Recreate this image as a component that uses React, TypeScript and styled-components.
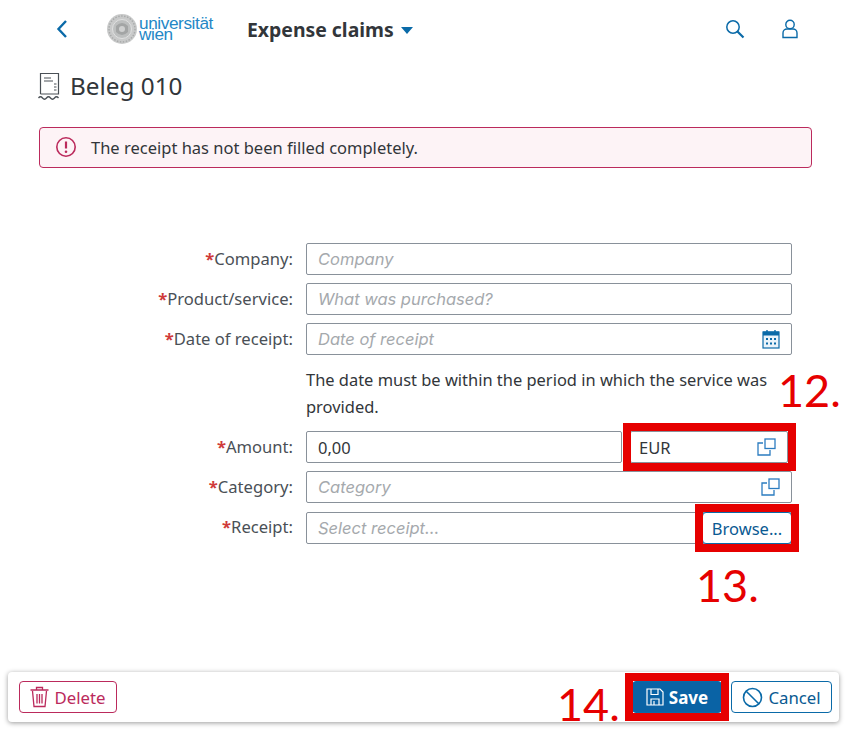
import React from 'react';
import styled, { createGlobalStyle } from 'styled-components';

const GlobalStyle = createGlobalStyle`
	html, body {
		margin: 0;
		padding: 0;
		background: #ffffff;
		font-family: 'Noto Sans', 'Open Sans', sans-serif;
		color: #32363a;
	}
	* {
		box-sizing: border-box;
	}
`;

const DARK_BLUE = '#0a6aa8';
const RED = '#e60000';
const ROSE = '#bb2a5c';

const ChevronLeft = () => (
	<svg width='14' height='20' viewBox='0 0 14 20' fill='none'>
		<path d='M11 2 L3.5 10 L11 18' stroke={DARK_BLUE} strokeWidth='2.4' />
	</svg>
);

const SearchIcon = () => (
	<svg width='20' height='20' viewBox='0 0 20 20' fill='none'>
		<circle cx='8' cy='8' r='6.2' stroke={DARK_BLUE} strokeWidth='1.5' />
		<path d='M12.5 12.5 L18.5 18.5' stroke={DARK_BLUE} strokeWidth='2.2' />
	</svg>
);

const UserIcon = () => (
	<svg width='18' height='20' viewBox='0 0 18 20' fill='none'>
		<circle cx='9' cy='5.5' r='4.2' stroke={DARK_BLUE} strokeWidth='1.4' />
		<path
			d='M2 18.5 V14 C2 11.5 4 10 6 10 H12 C14 10 16 11.5 16 14 V18.5 Z'
			stroke={DARK_BLUE}
			strokeWidth='1.4'
		/>
	</svg>
);

const ReceiptIcon = () => (
	<svg width='24' height='28' viewBox='0 0 24 28' fill='none' stroke='#4a5056' strokeWidth='1.2'>
		<path d='M2.5 22 V1.5 H20.5 V22 H2.5' />
		<path d='M6 6 H13 M6 9 H15 M16 12 H18.5 M16 15 H18.5 M16 18 H18.5' strokeWidth='1.1' />
		<path d='M0.5 26 q2 -2.5 4 0 t4 0 t4 0 t4 0 t4 0' strokeWidth='1.3' />
	</svg>
);

const ErrorIcon = () => (
	<svg width='22' height='22' viewBox='0 0 22 22' fill='none'>
		<circle cx='11' cy='11' r='9.2' stroke={ROSE} strokeWidth='1.6' />
		<path d='M11 5.5 V12.5' stroke={ROSE} strokeWidth='2.2' />
		<circle cx='11' cy='15.8' r='1.3' fill={ROSE} />
	</svg>
);

const CalendarIcon = () => (
	<svg width='18' height='20' viewBox='0 0 18 20' fill='none'>
		<rect x='1' y='3' width='16' height='16' stroke={DARK_BLUE} strokeWidth='1.2' fill='#eaf3fa' />
		<rect x='1' y='2.5' width='16' height='4' fill={DARK_BLUE} />
		<path d='M5 1 V3 M13 1 V3' stroke={DARK_BLUE} strokeWidth='1.4' />
		<path
			d='M4 9 H6 V11 H4 Z M8 9 H10 V11 H8 Z M12 9 H14 V11 H12 Z M4 13.5 H6 V15.5 H4 Z M8 13.5 H10 V15.5 H8 Z M12 13.5 H14 V15.5 H12 Z'
			fill={DARK_BLUE}
		/>
	</svg>
);

const ValueHelpIcon = () => (
	<svg width='19' height='18' viewBox='0 0 19 18' fill='none' stroke='#2b7cc0' strokeWidth='1.3'>
		<path d='M6 5 H1 V17 H13 V12' />
		<rect x='8' y='1' width='10' height='9.5' />
	</svg>
);

const TrashIcon = () => (
	<svg width='19' height='22' viewBox='0 0 19 22' fill='none' stroke={ROSE} strokeWidth='1.3'>
		<path d='M0.5 4 H18.5 M6.5 3.5 V1.5 H12.5 V3.5' />
		<path d='M2.5 5 L4 20.5 H15 L16.5 5' />
		<path d='M7 8 V17.5 M9.5 8 V17.5 M12 8 V17.5' />
	</svg>
);

const SaveIcon = () => (
	<svg width='18' height='18' viewBox='0 0 18 18' fill='none' stroke='#ffffff' strokeWidth='1.2'>
		<path d='M1 1 H14 L17 4 V17 H1 Z' />
		<path d='M5 1 V6.5 H12 V1' />
		<path d='M5 17 V11 H13 V17 M8 13 V17' />
	</svg>
);

const CancelIcon = () => (
	<svg width='21' height='21' viewBox='0 0 21 21' fill='none' stroke={DARK_BLUE} strokeWidth='1.6'>
		<circle cx='10.5' cy='10.5' r='9' />
		<path d='M4.2 4.2 L16.8 16.8' />
	</svg>
);

const Seal = () => (
	<svg width='30' height='30' viewBox='0 0 30 30'>
		<circle cx='15' cy='15' r='15' fill='#c9caca' />
		<circle cx='15' cy='15' r='13' fill='none' stroke='#a9abab' strokeWidth='1.5' strokeDasharray='1.5 1.5' />
		<circle cx='15' cy='15' r='9.5' fill='#bdbfbf' stroke='#e0e1e1' strokeWidth='1' />
		<path d='M9 12 q6 -6 12 0 v6 q-6 6 -12 0 Z' fill='#a3a5a5' />
		<circle cx='15' cy='15' r='3' fill='#cfd0d0' />
	</svg>
);

const Page = styled.div`
	width: 847px;
	height: 731px;
	display: flex;
	flex-direction: column;
	overflow: hidden;
`;

const Header = styled.header`
	height: 58px;
	display: flex;
	align-items: center;
	padding: 0 48px 0 55px;
`;

const BackButton = styled.div`
	width: 52px;
	display: flex;
	align-items: center;
`;

const Logo = styled.div`
	display: flex;
	align-items: center;
	gap: 2px;
	width: 140px;
`;

const LogoText = styled.div`
	font-family: 'Liberation Sans', sans-serif;
	font-size: 17.2px;
	line-height: 11.5px;
	letter-spacing: -0.4px;
	color: #2487c6;
`;

const AppTitle = styled.div`
	display: flex;
	align-items: center;
	gap: 7px;
	font-size: 19.4px;
	font-weight: 700;
	color: #32363a;
	flex: 1;
`;

const Caret = styled.span`
	width: 0;
	height: 0;
	border-left: 6.5px solid transparent;
	border-right: 6.5px solid transparent;
	border-top: 7px solid ${DARK_BLUE};
	margin-top: 2px;
`;

const HeaderActions = styled.div`
	display: flex;
	align-items: center;
	gap: 36px;
`;

const TitleRow = styled.div`
	display: flex;
	align-items: center;
	gap: 8px;
	height: 30px;
	margin: 13px 0 0 38px;
`;

const PageTitle = styled.h1`
	margin: 0 0 2px;
	font-size: 24.3px;
	font-weight: 400;
	color: #32363a;
`;

const MessageStrip = styled.div`
	margin: 26px 35px 0 39px;
	height: 41px;
	display: flex;
	align-items: center;
	gap: 14px;
	padding: 0 15px 1px;
	background: #fdf3f6;
	border: 1px solid ${ROSE};
	border-radius: 4px;
	font-size: 16.5px;
	color: #32363a;
`;

const Form = styled.form`
	margin: 75px 55px 0 0;
	display: grid;
	grid-template-columns: 293px 1fr;
	column-gap: 13px;
	row-gap: 8px;
`;

const Label = styled.label`
	height: 32px;
	display: flex;
	align-items: center;
	justify-content: flex-end;
	padding-bottom: 1px;
	font-size: 16.6px;
	color: #4a5056;
`;

const Star = styled.span`
	color: #d03a3a;
	font-weight: 700;
`;

const FieldBox = styled.div<{ $width?: string }>`
	position: relative;
	height: 32px;
	width: ${(p) => p.$width || 'auto'};
	flex: ${(p) => (p.$width ? 'none' : '1')};
	display: flex;
	align-items: center;
	justify-content: space-between;
	padding: 0 11px 0 ${(p) => (p.$width ? 8 : 11)}px;
	background: #ffffff;
	border: 1px solid #89919a;
	border-radius: 2px;
`;

const Placeholder = styled.span`
	font-family: 'Inter', 'Noto Sans', sans-serif;
	font-size: 16.5px;
	font-style: italic;
	color: #a5a9ad;
`;

const Value = styled.span`
	font-size: 16.5px;
	color: #32363a;
`;

const Hint = styled.div`
	position: relative;
	grid-column: 2;
	margin: 4px 0 3px;
	font-size: 16.45px;
	line-height: 26.5px;
	color: #32363a;
`;

const SplitField = styled.div`
	display: flex;
	gap: 8px;
	padding-right: 4px;
`;

const BrowseRow = styled.div`
	display: flex;
	position: relative;
	margin-top: 1px;
`;

const BrowseButton = styled.button`
	position: absolute;
	right: 0;
	top: 0;
	width: 90px;
	height: 32px;
	padding: 0;
	background: #ffffff;
	border: 1px solid ${DARK_BLUE};
	border-radius: 4px;
	font: inherit;
	font-size: 16.5px;
	color: #0a5a92;
`;

// red marks drawn over the screenshot
const Highlight = styled.span<{ $t: number; $r: number; $b: number; $l: number }>`
	position: absolute;
	top: ${(p) => p.$t}px;
	right: ${(p) => p.$r}px;
	bottom: ${(p) => p.$b}px;
	left: ${(p) => p.$l}px;
	border: 8px solid ${RED};
	pointer-events: none;
	z-index: 2;
`;

const StepNumber = styled.span<{ $x: number; $y: number }>`
	position: absolute;
	left: ${(p) => p.$x}px;
	top: ${(p) => p.$y}px;
	font-family: 'Lato', 'DejaVu Sans', sans-serif;
	font-size: 45px;
	line-height: 46px;
	color: ${RED};
	white-space: nowrap;
	z-index: 2;
`;

const Footer = styled.footer`
	position: relative;
	margin: auto 8px 9px 8px;
	height: 50px;
	display: flex;
	align-items: center;
	gap: 9px;
	padding: 0 7px 0 11px;
	background: #ffffff;
	border-radius: 4px;
	box-shadow: 0 1px 5px rgba(0, 0, 0, 0.4);
`;

const Spacer = styled.div`
	flex: 1;
`;

const ActionButton = styled.button<{ $kind: 'danger' | 'primary' | 'plain'; $width: number }>`
	position: relative;
	width: ${(p) => p.$width}px;
	height: 32px;
	display: flex;
	align-items: center;
	justify-content: center;
	gap: 5px;
	padding: 0;
	font: inherit;
	font-size: ${(p) => (p.$kind === 'primary' ? 17 : 16.8)}px;
	font-weight: ${(p) => (p.$kind === 'primary' ? 700 : 400)};
	border-radius: 4px;
	color: ${(p) => (p.$kind === 'danger' ? ROSE : p.$kind === 'primary' ? '#ffffff' : '#0a5a92')};
	background: ${(p) => (p.$kind === 'primary' ? '#0a63a5' : '#ffffff')};
	border: 1px solid ${(p) => (p.$kind === 'danger' ? ROSE : DARK_BLUE)};
`;

const Required = ({ children }: { children: string }) => (
	<Label>
		<Star>*</Star>
		{children}:
	</Label>
);

const App = () => {
	return (
		<Page>
			<GlobalStyle />
			<Header>
				<BackButton>
					<ChevronLeft />
				</BackButton>
				<Logo>
					<Seal />
					<LogoText>
						universität
						<br />
						wien
					</LogoText>
				</Logo>
				<AppTitle>
					Expense claims
					<Caret />
				</AppTitle>
				<HeaderActions>
					<SearchIcon />
					<UserIcon />
				</HeaderActions>
			</Header>

			<TitleRow>
				<ReceiptIcon />
				<PageTitle>Beleg 010</PageTitle>
			</TitleRow>

			<MessageStrip>
				<ErrorIcon />
				The receipt has not been filled completely.
			</MessageStrip>

			<Form>
				<Required>Company</Required>
				<FieldBox>
					<Placeholder>Company</Placeholder>
				</FieldBox>

				<Required>Product/service</Required>
				<FieldBox>
					<Placeholder>What was purchased?</Placeholder>
				</FieldBox>

				<Required>Date of receipt</Required>
				<FieldBox>
					<Placeholder>Date of receipt</Placeholder>
					<CalendarIcon />
				</FieldBox>

				<Hint>
					The date must be within the period in which the service was provided.
					<StepNumber $x={472} $y={0}>
						12.
					</StepNumber>
				</Hint>

				<Required>Amount</Required>
				<SplitField>
					<FieldBox>
						<Value>0,00</Value>
					</FieldBox>
					<FieldBox $width='158px'>
						<Value>EUR</Value>
						<ValueHelpIcon />
						<Highlight $t={-9} $r={-9} $b={-9} $l={-8} />
					</FieldBox>
				</SplitField>

				<Required>Category</Required>
				<FieldBox>
					<Placeholder>Category</Placeholder>
					<ValueHelpIcon />
				</FieldBox>

				<Required>Receipt</Required>
				<BrowseRow>
					<FieldBox>
						<Placeholder>Select receipt...</Placeholder>
					</FieldBox>
					<BrowseButton type='button'>
						Browse...
						<Highlight $t={-9} $r={-8} $b={-9} $l={-8} />
					</BrowseButton>
					<StepNumber $x={390} $y={50}>
						13.
					</StepNumber>
				</BrowseRow>
			</Form>

			<Footer>
				<ActionButton type='button' $kind='danger' $width={98}>
					<TrashIcon />
					Delete
				</ActionButton>
				<Spacer />
				<StepNumber $x={549} $y={9}>
					14.
				</StepNumber>
				<ActionButton type='button' $kind='primary' $width={90}>
					<SaveIcon />
					Save
					<Highlight $t={-9} $r={-8} $b={-9} $l={-8} />
				</ActionButton>
				<ActionButton type='button' $kind='plain' $width={101}>
					<CancelIcon />
					Cancel
				</ActionButton>
			</Footer>
		</Page>
	);
};

export default App;
